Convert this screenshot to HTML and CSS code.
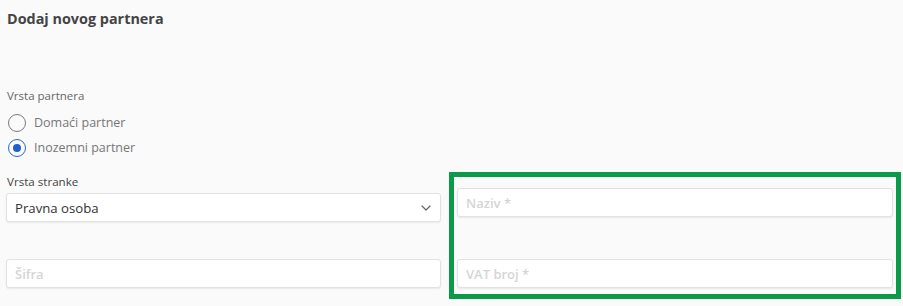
FILE: index.html
```html
<!DOCTYPE html>
<html lang="hr">
<head>
<meta charset="utf-8">
<title>Dodaj novog partnera</title>
<link rel="stylesheet" href="styles.css">
</head>
<body>
<div class="page">
  <h1 class="title">Dodaj novog partnera</h1>

  <div class="group-label">Vrsta partnera</div>
  <div class="radios">
    <div class="radio-row">
      <span class="radio"></span>
      <span class="radio-text">Domaći partner</span>
    </div>
    <div class="radio-row">
      <span class="radio checked"><span class="dot"></span></span>
      <span class="radio-text">Inozemni partner</span>
    </div>
  </div>

  <div class="grid">
    <div class="col-left">
      <div class="field-label">Vrsta stranke</div>
      <div class="field select">
        <span class="value">Pravna osoba</span>
        <svg class="chevron" width="10" height="6" viewBox="0 0 10 6"><path d="M1 1l4 4 4-4" fill="none" stroke="#666" stroke-width="1.2" stroke-linecap="round" stroke-linejoin="round"/></svg>
      </div>
      <div class="field input sifra"><span class="placeholder">Šifra</span></div>
    </div>
    <div class="col-right">
      <div class="field input"><span class="placeholder">Naziv *</span></div>
      <div class="field input vat"><span class="placeholder">VAT broj *</span></div>
    </div>
  </div>
</div>
</body>
</html>
```

FILE: styles.css
```css
* { box-sizing: border-box; }
html, body { margin: 0; padding: 0; }
body {
  background: #fafafa;
  font-family: "Open Sans", "Noto Sans", sans-serif;
  width: 903px;
  height: 306px;
  overflow: hidden;
}
.page {
  padding: 0 2px 0 6px;
}
.title {
  margin: 9px 0 0 1px;
  font-size: 14.4px;
  line-height: 20px;
  font-weight: 700;
  color: #444;
}
.group-label {
  margin: 59px 0 0 1px;
  font-size: 11.5px;
  line-height: 16px;
  color: #666;
}
.radios {
  margin-top: 6px;
}
.radio-row {
  display: flex;
  align-items: center;
  height: 25px;
  padding-left: 2px;
}
.radio {
  width: 18px;
  height: 18px;
  border: 1.5px solid #7a7a7a;
  border-radius: 50%;
  display: flex;
  align-items: center;
  justify-content: center;
  flex: none;
}
.radio.checked {
  border-color: #2b67cf;
}
.dot {
  width: 8px;
  height: 8px;
  border-radius: 50%;
  background: #2160c6;
}
.radio-text {
  margin-left: 8px;
  font-size: 12.5px;
  line-height: 25px;
  color: #777;
}
.grid {
  margin-top: 12px;
  display: grid;
  grid-template-columns: 435px 452px;
  column-gap: 8px;
  align-items: start;
}
.col-left {
  padding-top: 2px;
}
.field-label {
  font-size: 11.6px;
  line-height: 16px;
  color: #444;
  margin: 0 0 3px 1px;
}
.field {
  height: 29px;
  background: #fff;
  border: 1px solid #e2e2e2;
  border-radius: 3px;
  box-shadow: 0 1px 2px rgba(0, 0, 0, 0.07);
  display: flex;
  align-items: center;
  padding: 0 8px;
}
.select .value {
  flex: 1;
  font-size: 13.2px;
  color: #333;
}
.chevron {
  margin-right: 1px;
}
.placeholder {
  font-size: 13px;
  font-weight: 600;
  color: #d5d5d5;
}
.sifra {
  margin-top: 37px;
}
.col-right {
  border: 5px solid #0a9a4a;
  padding: 11px 3px 6px 3px;
}
.vat {
  margin-top: 42px;
}
```
